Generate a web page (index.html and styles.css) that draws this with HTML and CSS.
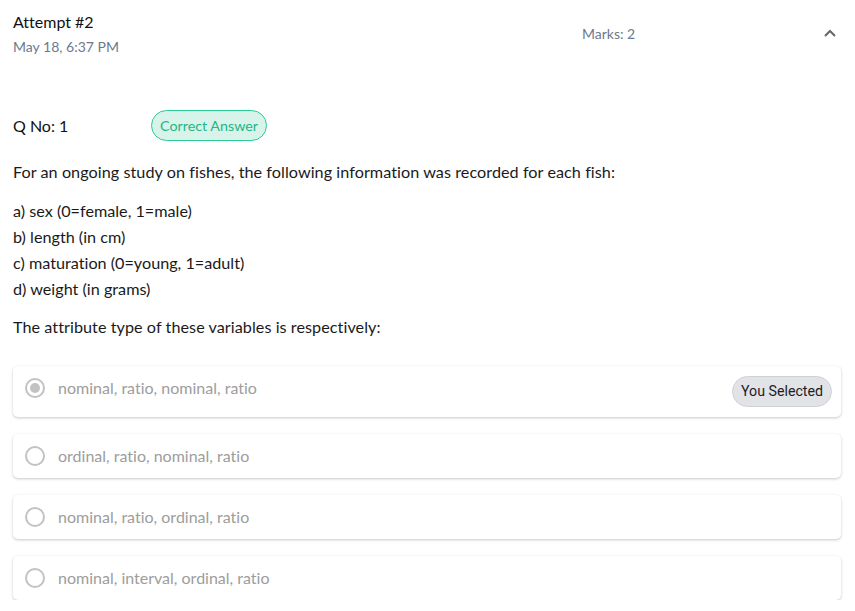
FILE: index.html
```html
<!DOCTYPE html>
<html>
<head>
<meta charset="utf-8">
<link rel="stylesheet" href="styles.css">
</head>
<body>
<div class="page">
  <div class="header">
    <div class="head-left">
      <div class="title">Attempt #2</div>
      <div class="date">May 18, 6:37 PM</div>
    </div>
    <div class="marks">Marks: 2</div>
    <div class="chevron">
      <svg width="14" height="10" viewBox="0 0 14 10"><path d="M2 8 L7 3 L12 8" fill="none" stroke="#666" stroke-width="2"/></svg>
    </div>
  </div>

  <div class="qrow">
    <div class="qno">Q No: 1</div>
    <div class="correct">Correct Answer</div>
  </div>

  <p class="qtext">For an ongoing study on fishes, the following information was recorded for each fish:</p>
  <div class="items">
    <div>a) sex (0=female, 1=male)</div>
    <div>b) length (in cm)</div>
    <div>c) maturation (0=young, 1=adult)</div>
    <div>d) weight (in grams)</div>
  </div>
  <p class="qtext2">The attribute type of these variables is respectively:</p>

  <div class="options">
    <div class="option tall">
      <span class="radio checked"></span>
      <span class="otext">nominal, ratio, nominal, ratio</span>
      <span class="selected">You Selected</span>
    </div>
    <div class="option">
      <span class="radio"></span>
      <span class="otext">ordinal, ratio, nominal, ratio</span>
    </div>
    <div class="option">
      <span class="radio"></span>
      <span class="otext">nominal, ratio, ordinal, ratio</span>
    </div>
    <div class="option">
      <span class="radio"></span>
      <span class="otext">nominal, interval, ordinal, ratio</span>
    </div>
  </div>
</div>
</body>
</html>
```
FILE: styles.css
```css
* { box-sizing: border-box; }
body {
  margin: 0;
  background: #fff;
  font-family: Lato, "Noto Sans", sans-serif;
  font-variant-ligatures: none;
  color: #1a1a1a;
}
.page {
  width: 841px;
  padding: 11px 0 0 13px;
}
.header {
  display: flex;
  align-items: flex-start;
}
.head-left { width: 569px; }
.title { font-size: 16px; line-height: 22px; color: #111; }
.date { font-size: 14px; line-height: 20px; margin-top: 4px; color: #6b7a8e; }
.marks {
  flex: 1;
  font-size: 14px;
  line-height: 22px;
  margin-top: 12px;
  color: #6b7a8e;
}
.chevron {
  width: 18px;
  margin-top: 17px;
}
.chevron svg { display: block; }
.qrow {
  display: flex;
  align-items: center;
  margin-top: 53px;
  height: 31px;
}
.qno { width: 138px; font-size: 16px; color: #111; }
.correct {
  height: 31px;
  line-height: 29px;
  padding: 0 8px;
  border: 1px solid #2ccb96;
  background: #d7f3ea;
  color: #22b784;
  border-radius: 16px;
  font-size: 14.3px;
}
.qtext { margin: 20px 0 0; font-size: 16.2px; line-height: 22px; letter-spacing: 0.05px; }
.items { margin-top: 15px; font-size: 16.2px; line-height: 26px; }
.qtext2 { margin: 14px 0 0; font-size: 16.2px; line-height: 22px; letter-spacing: 0.05px; }
.options {
  margin-top: 28px;
  display: flex;
  flex-direction: column;
  gap: 17px;
}
.option {
  display: flex;
  align-items: flex-start;
  height: 44px;
  padding: 11px 9px 0 12px;
  background: #fff;
  border-radius: 5px;
  box-shadow: 0 1px 3px rgba(0,0,0,0.22);
}
.option.tall { height: 51px; }
.radio {
  width: 20px;
  height: 20px;
  margin-top: 1px;
  border: 2px solid #c2c2c2;
  border-radius: 50%;
  display: flex;
  align-items: center;
  justify-content: center;
  flex: none;
}
.radio.checked::after {
  content: "";
  width: 10px;
  height: 10px;
  border-radius: 50%;
  background: #c2c2c2;
}
.otext {
  flex: 1;
  margin-left: 13px;
  font-size: 16px;
  line-height: 22px;
  color: #9d9d9d;
}
.selected {
  margin-top: -1px;
  height: 31px;
  line-height: 29px;
  padding: 0 8px;
  background: #e2e3e6;
  border: 1px solid #cfd1d5;
  border-radius: 16px;
  font-family: Roboto, "Open Sans", sans-serif;
  font-size: 14.2px;
  color: #1c1c28;
}
```
